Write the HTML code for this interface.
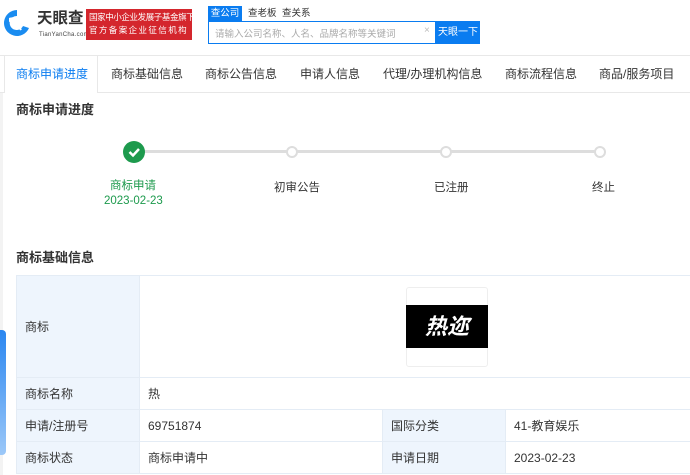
<!DOCTYPE html>
<html><head><meta charset="utf-8"><style>
*{margin:0;padding:0;box-sizing:border-box}
body{width:690px;height:475px;overflow:hidden;background:#fff;font-family:"Liberation Sans","Noto Sans CJK SC",sans-serif;font-size:12px;color:#333;position:relative}
.abs{position:absolute;white-space:nowrap}
.tab{position:absolute;top:56px;height:36px;line-height:36px;font-size:12px;color:#333;white-space:nowrap}
td{border:1px solid #e4ecf5;padding:0 8px;font-size:12px;color:#333}
td.l{background:#eef5fd}
</style></head><body>
<svg class="abs" style="left:3px;top:8px" width="28" height="30" viewBox="0 0 28 30">
<path d="M14 2 A13 13 0 1 0 26 20 L20 18 A7 7 0 1 1 14 8 Z" fill="#1a8cf0"/>
<path d="M6 10 C12 8 20 10 24 16 L19 17 C16 13 11 12 6 14Z" fill="#fff"/>
<path d="M8 18 C12 16 16 18 18 22" stroke="#fff" stroke-width="2" fill="none"/>
</svg>
<div class="abs" style="left:37px;top:9px;font-size:15.5px;font-weight:bold;color:#333;line-height:20px">天眼查</div>
<div class="abs" style="left:39px;top:32px;font-size:6px;color:#444;letter-spacing:.3px">TianYanCha.com</div>
<div class="abs" style="left:86px;top:9px;width:106px;height:31px;background:#d4262d;color:#fff;line-height:13px;padding:2px 0 0 3px">
<div style="font-size:8.5px;letter-spacing:-0.4px">国家中小企业发展子基金旗下</div>
<div style="font-size:8.5px;letter-spacing:1.4px">官方备案企业征信机构</div></div>
<div class="abs" style="left:208px;top:6px;width:34px;height:15px;background:#0a7cf0;color:#fff;font-size:9.5px;line-height:15px;text-align:center">查公司</div>
<div class="abs" style="left:248px;top:6px;font-size:9.5px;line-height:15px;color:#333">查老板</div>
<div class="abs" style="left:282px;top:6px;font-size:9.5px;line-height:15px;color:#333">查关系</div>
<div class="abs" style="left:208px;top:21px;width:228px;height:23px;border:1px solid #0a7cf0;background:#fff">
<span class="abs" style="left:6px;top:4px;font-size:9.5px;color:#aaa">请输入公司名称、人名、品牌名称等关键词</span>
<span class="abs" style="left:215px;top:3px;font-size:10px;color:#bbb">×</span>
</div>
<div class="abs" style="left:436px;top:21px;width:44px;height:23px;background:#0a7cf0;color:#fff;text-align:center;line-height:23px;font-size:10px">天眼一下</div>
<div class="abs" style="left:0;top:55px;width:690px;height:38px;border-top:1px solid #e8e8e8;border-bottom:1px solid #e8e8e8"></div>
<div class="abs" style="left:4px;top:56px;width:94px;height:37px;background:#fff;border-right:1px solid #e8e8e8;border-left:1px solid #e8e8e8"></div>
<div class="tab" style="left:16px;color:#0a7cf0">商标申请进度</div>
<div class="tab" style="left:111px">商标基础信息</div>
<div class="tab" style="left:205px">商标公告信息</div>
<div class="tab" style="left:300px">申请人信息</div>
<div class="tab" style="left:383px">代理/办理机构信息</div>
<div class="tab" style="left:505px">商标流程信息</div>
<div class="tab" style="left:599px">商品/服务项目</div>
<div class="abs" style="left:0;top:93px;width:3px;height:382px;background:#f3f3f3"></div>
<div class="abs" style="left:16px;top:99px;font-size:13px;font-weight:bold;color:#333">商标申请进度</div>
<div class="abs" style="left:140px;top:150px;width:460px;height:3px;background:#ddd"></div>
<div class="abs" style="left:123px;top:141px;width:22px;height:22px;border-radius:50%;background:#1d9a4d"></div>
<svg class="abs" style="left:123px;top:141px" width="22" height="22"><path d="M6.5 11 L10 14.5 L16 8" stroke="#fff" stroke-width="2.5" fill="none"/></svg>
<div class="abs" style="left:286px;top:146px;width:12px;height:12px;border-radius:50%;background:#fff;border:2.5px solid #ddd"></div>
<div class="abs" style="left:440px;top:146px;width:12px;height:12px;border-radius:50%;background:#fff;border:2.5px solid #ddd"></div>
<div class="abs" style="left:594px;top:146px;width:12px;height:12px;border-radius:50%;background:#fff;border:2.5px solid #ddd"></div>
<div class="abs" style="left:110px;top:177px;color:#1d9a4d;font-size:11.5px">商标申请</div>
<div class="abs" style="left:104px;top:195px;color:#1d9a4d;font-size:11.5px">2023-02-23</div>
<div class="abs" style="left:274px;top:179px;font-size:11.5px">初审公告</div>
<div class="abs" style="left:434px;top:179px;font-size:11.5px">已注册</div>
<div class="abs" style="left:592px;top:179px;font-size:11.5px">终止</div>
<div class="abs" style="left:16px;top:247px;font-size:13px;font-weight:bold;color:#333">商标基础信息</div>
<table class="abs" style="left:16px;top:275px;width:690px;border-collapse:collapse;white-space:normal">
<tr style="height:102px"><td class="l" style="width:123px">商标</td><td colspan="3" style="position:relative">
<div class="abs" style="left:266px;top:11px;width:82px;height:80px;border:1px solid #eee;border-radius:3px;background:#fff"><div class="abs" style="left:-1px;top:17px;width:82px;height:43px;background:#000;color:#fff;font-size:22px;font-weight:bold;text-align:center;line-height:43px;font-style:italic">热迩</div></div></td></tr>
<tr style="height:32px"><td class="l">商标名称</td><td colspan="3">热</td></tr>
<tr style="height:32px"><td class="l">申请/注册号</td><td style="width:243px">69751874</td><td class="l" style="width:123px">国际分类</td><td>41-教育娱乐</td></tr>
<tr style="height:32px"><td class="l">商标状态</td><td>商标申请中</td><td class="l">申请日期</td><td>2023-02-23</td></tr>
</table>
<div class="abs" style="left:0;top:330px;width:6px;height:125px;background:linear-gradient(#2a86f0,#9cc8f8);border-radius:0 4px 4px 0"></div>
</body></html>
